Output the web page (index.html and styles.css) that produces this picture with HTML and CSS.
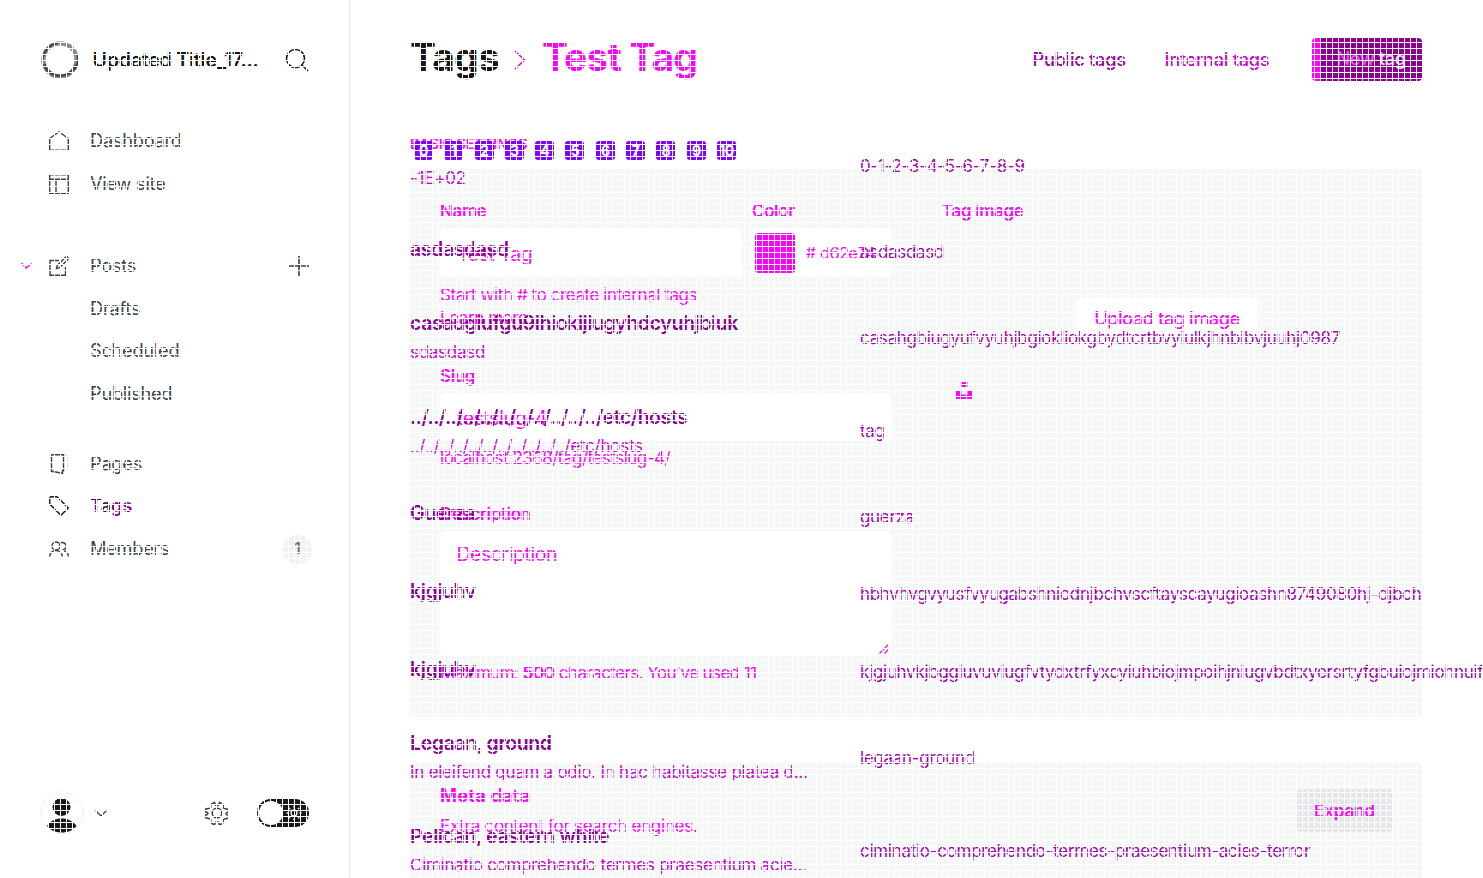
FILE: index.html
```html
<!DOCTYPE html>
<html lang="en">
<head>
<meta charset="utf-8">
<title>Tags</title>
<link rel="stylesheet" href="styles.css">
</head>
<body>
<div class="app">
  <aside class="sidebar">
    <div class="site">
      <svg class="site-logo" viewBox="0 0 40 40"><circle cx="20" cy="20" r="16.6" fill="none" stroke="#8a8a8a" stroke-width="4.4"/><path d="M4 24A17 17 0 0 0 36 25" fill="none" stroke="#444" stroke-width="2.6"/><path d="M5 12A18 18 0 0 1 18 3M2.500 22A18 18 0 0 1 5 12M37.500 15A18 18 0 0 1 35 29" fill="none" stroke="#333" stroke-width="1.600"/></svg>
      <span class="site-name">Updated Title_17...</span>
      <svg class="site-search" viewBox="0 0 24 24"><circle cx="10.500" cy="10.500" r="9"/><path d="M17 17l6 6"/></svg>
    </div>
    <nav class="nav">
      <a class="item"><i></i><svg viewBox="0 0 20 20"><path d="M.7 19.300V7.500L10 .8l9.300 6.700v11.800z"/></svg><span>Dashboard</span></a>
      <a class="item"><i></i><svg viewBox="0 0 20 20"><path d="M.7.8h18.600v18.500H.7zM.7 5.300h18.600M7 5.300v14"/></svg><span>View site</span></a>
    </nav>
    <nav class="nav nav-posts">
      <a class="item"><svg class="caret" viewBox="0 0 12 8"><path d="M1 1l5 5 5-5"/></svg><svg viewBox="0 0 20 20"><path d="M10 4.500H1v14.800h15.500V11M18.800 1.300c-.9-.8-1.800-.6-2.600.2L8.300 9.400 7.500 12.500l3.100-.8 7.900-7.800c.8-.8 1-1.800.3-2.600z"/></svg><span>Posts</span><svg class="plus" viewBox="0 0 22 22"><path d="M11 1v20M1 11h20"/></svg></a>
      <a class="item sub">Drafts</a>
      <a class="item sub">Scheduled</a>
      <a class="item sub">Published</a>
    </nav>
    <nav class="nav nav-pages">
      <a class="item"><i></i><svg viewBox="0 0 20 20"><path d="M7 .8h7.500v16H13M2.500.8H15M2.500.8v16.500l11 2v-3"/><path class="faint" d="M15 .8h3v14h-3"/></svg><span>Pages</span></a>
      <a class="item active"><i></i><svg viewBox="0 0 20 20"><path d="M.8 7.500V2c0-.7.500-1.200 1.200-1.200h5.500c.5 0 .8.200 1.100.5L19.200 12l-7.300 7.300L1.200 8.600c-.3-.3-.4-.6-.4-1.100z"/></svg><span class="current">Tags</span></a>
      <a class="item"><i></i><svg viewBox="0 0 20 20"><circle cx="7" cy="7" r="4"/><path d="M.7 17.500c0-3.500 2.800-6 6.300-6 3.500 0 6.300 2.500 6.300 6M11 4.500c2-2 6-.8 6 2.500 0 2.200-1.600 3.600-3.500 3.600M15 11.800c2.500.4 4.300 2.500 4.300 5.700"/></svg><span>Members</span><em class="count">1</em></a>
    </nav>
    <footer class="user">
      <svg class="avatar" viewBox="0 0 44 44"><circle cx="22" cy="22" r="21" fill="#fff" stroke="#e9ebee"/><circle cx="21.500" cy="16" r="9" fill="#15171a"/><path d="M7 35c3-5 8-7.500 14.500-7.500S33 30 36.500 35c-3.500 4.500-9 6.500-15 6.500S11 39.500 7 35z" fill="#15171a"/></svg>
      <svg class="user-caret" viewBox="0 0 14 8"><path d="M1 1l6 6 6-6"/></svg>
      <svg class="gear" viewBox="0 0 24 24"><circle cx="12" cy="12" r="4.800"/><path d="M9.500 1.500l1 2.300c.6 1.200 2.400 1.200 3 0l1-2.300 3 1.300c.8.500 1 1 .8 1.800-.5 2 .3 3 1.900 3.200l3 .4v3c-1.500.2-2.200.6-2.200 1.600s.7 1.300 2.200 1.500v3l-3 .5c-1.600.2-2.400 1.200-1.900 3 .2.800 0 1.400-.8 1.800l-3 1.100-1-2.100c-.6-1.200-2.400-1.200-3 0l-1 2.100-3-1.300c-.8-.4-1-1-.8-1.800.5-1.800-.3-2.800-1.900-3L.8 17v-3c1.500-.2 2.200-.6 2.200-1.500s-.7-1.400-2.200-1.600V8l3-.4C5.400 7.400 6.200 6.400 5.700 4.600c-.2-.8 0-1.300.8-1.800z"/></svg>
      <span class="toggle"><span class="knob"></span><svg viewBox="0 0 16 16"><circle cx="8" cy="8" r="3"/><path d="M8 .5v2M8 13.500v2M.5 8h2M13.500 8h2M2.700 2.700l1.400 1.400M11.900 11.900l1.400 1.400M2.700 13.300l1.400-1.400M11.900 4.100l1.400-1.400"/></svg></span>
    </footer>
  </aside>

  <main class="main">
    <header class="head">
      <h1 class="crumbs"><span>Tags</span><svg viewBox="0 0 12 20"><path d="M1 1l9.500 9L1 19"/></svg><span class="m">Test Tag</span></h1>
      <div class="tabs"><a class="tab-public">Public tags</a><a class="tab-internal">Internal tags</a><a class="new-tag"><b>New</b> tag</a></div>
    </header>

    <div class="stack">
      <form class="form">
        <h4 class="section">BASIC SETTINGS</h4>
        <section class="panel basics">
          <div class="fields">
            <div class="row">
              <div class="field"><label>Name</label><div class="input">Test Tag</div></div>
              <div class="field color"><label>Color</label><div class="input"><span class="swatch"></span><span class="hash">#</span><span class="hex">d62e74</span></div></div>
            </div>
            <p class="hint first">Start with # to create internal tags</p>
            <p class="hint">Learn more</p>
            <div class="field slug-field"><label>Slug</label><div class="input">testslug-4</div></div>
            <p class="hint url">localhost:2368/tag/testslug-4/</p>
            <div class="field desc-field"><label>Description</label><div class="area">Description<svg viewBox="0 0 10 10"><path d="M.5 9.500l9-9M5.500 9.500l4-4"/></svg></div></div>
            <p class="hint max">Maximum: <b>500</b> characters. You’ve used 11</p>
          </div>
          <div class="image">
            <label>Tag image</label>
            <div class="uploader"><span class="upload">Upload tag image</span><svg viewBox="0 0 17 17"><path d="M5.500 0h6v5h-6zM0 8.500h5.300v4h6.200v-4h5.300V17H0z"/></svg></div>
          </div>
        </section>
        <section class="panel meta">
          <div><h3>Meta data</h3><p>Extra content for search engines.</p></div>
          <span class="expand">Expand</span>
        </section>
        <section class="panel rest"></section>
      </form>

      <ol class="list">
        <li class="tall first"><div><h3 class="keys"><span>0</span><span>1</span><span>2</span><span>3</span><span>4</span><span>5</span><span>6</span><span>7</span><span>8</span><span>9</span><span>10</span></h3><p>-1E+02</p></div><a>0-1-2-3-4-5-6-7-8-9</a></li>
        <li><div><h3>asdasdasd</h3></div><a>asdasdasd</a></li>
        <li class="tall"><div><h3>casaugiufgu9ihiokijiugyhdcyuhjbiuk</h3><p>sdasdasd</p></div><a>casahgbiugyufvyuhjbgiokliokgbydtcrtbvyiulkjhnbibvjuuhj0987</a></li>
        <li class="tall"><div><h3 class="path">../../../../../../../../../../../etc/hosts</h3><p>../../../../../../../../../../../etc/hosts</p></div><a>tag</a></li>
        <li><div><h3>Guerza</h3></div><a>guerza</a></li>
        <li><div><h3>kjgjuhv</h3></div><a>hbhvhvgvyusfvyugabshniodnjbchvscftayscayugioashn8749080hj-djbch</a></li>
        <li><div><h3>kjgjuhv</h3></div><a>kjgjuhvkjbggiuvuviugfvtydxtrfyxcyiuhbiojmpoihjniugvbdtxyersrtyfgbuiojmiohnuif</a></li>
        <li class="tall"><div><h3>Legaan, ground</h3><p>In eleifend quam a odio. In hac habitasse platea d...</p></div><a>legaan-ground</a></li>
        <li class="tall"><div><h3>Pelican, eastern white</h3><p>Ciminatio comprehendo termes praesentium acie...</p></div><a>ciminatio-comprehendo-termes-praesentium-acies-terror</a></li>
      </ol>
    </div>
  </main>
</div>
<div class="mesh"></div>
</body>
</html>
```
FILE: styles.css
```css
* { box-sizing: border-box; }
body { margin: 0; background: #fff; font-family: Inter, "Liberation Sans", sans-serif; color: #15171a; overflow: hidden; }
h1, h3, h4, p, ol { margin: 0; padding: 0; }
svg { display: block; fill: none; stroke: currentColor; flex: none; }
.app { display: flex; height: 878px; overflow: hidden; }

/* Sidebar */
.sidebar { width: 350px; flex: none; border-right: 1px solid #dfe1e4; display: flex; flex-direction: column; color: #394047; }
.site { display: flex; align-items: center; height: 40px; margin-top: 40px; padding-left: 40px; color: #15171a; }
.site-logo { width: 40px; height: 40px; }
.site-name { width: 192px; margin-left: 12.500px; font-size: 19.500px; font-weight: 600; letter-spacing: -.18px; white-space: nowrap; }
.site-search { width: 24px; height: 24px; margin-left: 0; stroke-width: 1.500; }
.nav { display: flex; flex-direction: column; margin-top: 39.700px; }
.nav-posts { margin-top: 39.800px; }
.nav-pages { margin-top: 27.500px; }
.item { display: flex; align-items: center; height: 42.600px; padding-left: 20px; font-size: 18.200px; letter-spacing: -.24px; }
.item i, .item .caret { width: 12px; height: 8px; margin-right: 17px; stroke-width: 1.300; }
.item .caret { color: #f0f; }
.item svg { width: 20px; height: 20px; margin-right: 21px; stroke-width: 1.400; }
.item svg.caret { width: 13px; height: 8px; margin-right: 16px; }
.item .faint { stroke: #d5d8dc; }
.item span { width: 193px; padding-bottom: 2px; }
.item svg.plus { width: 22px; height: 22px; margin: 0 0 0 5px; stroke-width: 1.600; }
.item.sub { padding: 0 0 2px 90px; }
.item.active { color: #15171a; font-weight: 600; letter-spacing: 0; }
.item .current { background: linear-gradient(90deg, #15171a 4px, #8b008f 4px 9px, #15171a 9px 19px, #8b008f 19px); background-clip: text; -webkit-background-clip: text; color: transparent; }
.count { width: 29px; height: 29px; border-radius: 50%; background: #eff1f3; font-size: 15.600px; font-style: normal; font-weight: 600; line-height: 28px; text-align: center; color: #6b7580; }
.user { display: flex; align-items: center; height: 44px; margin: auto 0 43px; padding-left: 39.500px; }
.avatar { width: 44px; height: 44px; stroke: none; }
.user-caret { width: 14px; height: 8px; margin-left: 10px; stroke-width: 1.300; }
.gear { width: 24px; height: 24px; margin-left: 97px; stroke-width: 1.500; }
.toggle { display: flex; align-items: center; justify-content: space-between; width: 52px; height: 28px; margin-left: 28.500px; padding: 0 7px 0 2px; border-radius: 14px; background: #15171a; color: #fff; }
.knob { width: 24px; height: 24px; border-radius: 50%; background: #fff; }
.toggle svg { width: 16px; height: 16px; stroke-width: 1.300; }

/* Header */
.main { flex: 1; min-width: 0; padding-left: 60px; overflow: hidden; }
.head { display: flex; align-items: center; justify-content: space-between; width: 1012px; height: 119.500px; }
.crumbs { display: flex; align-items: center; height: 47px; margin-top: -6px; font-size: 39px; font-weight: 700; letter-spacing: -.85px; line-height: 47px; white-space: nowrap; }
.crumbs svg { width: 12px; height: 20px; margin: 7px 15.500px 0 15.500px; color: #e000e0; stroke-width: 1.500; }
.m { color: #f0f; }
.tabs { display: flex; align-items: center; font-size: 18.200px; font-weight: 500; letter-spacing: -.26px; }
.tab-public { width: 132px; padding-bottom: 2px; color: #98009e; }
.tab-internal { width: 147.500px; padding-bottom: 2px; color: #c800d0; }
.new-tag { width: 110px; height: 43px; border-radius: 4px; background: linear-gradient(90deg, #f0f 8px, #8b008f 8px); color: #eadcf2; line-height: 41px; text-align: center; padding-left: 8px; letter-spacing: -.4px; }
.new-tag b { font-weight: 500; color: #f050f0; }

/* Form and list share one cell */
.stack { display: grid; }
.form, .list { grid-area: 1 / 1; min-width: 0; }
.form { width: 1012px; padding-top: 13.500px; color: #f0f; }
.section { height: 22px; margin-bottom: 14px; font-size: 14.300px; font-weight: 600; letter-spacing: -.1px; line-height: 21px; }
.panel { border-radius: 4px; background: #f5f7f7; }
.basics { display: flex; gap: 50px; height: 548px; padding: 30px 30px 0; }
.fields { width: 452px; }
.row { display: grid; grid-template-columns: 302px 140px; gap: 10px; }
label { display: block; height: 22px; margin-bottom: 7px; font-size: 16.900px; font-weight: 600; letter-spacing: -.32px; line-height: 24px; }
.input { display: flex; align-items: center; height: 48.500px; padding: 3px 17px 0; border-radius: 5px; background: #fff; font-size: 19.500px; letter-spacing: -.42px; }
.color .input { padding: 0 3px; }
.swatch { width: 40px; height: 40px; margin-top: 1px; border-radius: 3px; background: #f0f; }
.hash { width: 14px; margin-left: 11px; font-size: 15.600px; }
.hex { padding-top: 1px; font-size: 16.500px; letter-spacing: -.7px; }
.hint { font-size: 16.900px; letter-spacing: -.37px; line-height: 23px; white-space: nowrap; }
.hint.first { margin-top: 7px; }
.slug-field { margin-top: 34px; }
.hint.url { margin-top: 6px; letter-spacing: -.46px; }
.desc-field { margin-top: 31.500px; }
.area { display: flex; justify-content: space-between; height: 125px; padding: 9px 3px 2px 16.500px; border-radius: 5px; background: #fff; font-size: 19.500px; letter-spacing: -.46px; line-height: 28px; }
.area svg { width: 10px; height: 10px; align-self: flex-end; stroke-width: 1.300; }
.hint.max { margin-top: 6px; letter-spacing: -.52px; }
.image { width: 450px; }
.uploader { display: grid; grid-template-rows: 180px; justify-items: center; align-items: center; border-top: 1px solid #fbfcfc; border-radius: 4px; }
.upload { grid-area: 1 / 1; height: 42px; margin-bottom: 1px; padding: 0 18px; border-radius: 4px; background: #fff; font-size: 18.200px; font-weight: 500; letter-spacing: -.43px; line-height: 40px; }
.uploader svg { grid-area: 1 / 1; width: 17px; height: 17px; margin: 0 0 10px 14px; place-self: end start; fill: #f0f; stroke: none; }
.meta { display: flex; justify-content: space-between; height: 96px; margin-top: 46px; padding: 17px 30px 0; border-bottom: 1px solid #fbfcfc; border-radius: 4px 4px 0 0; }
.meta h3 { font-size: 18.200px; font-weight: 700; letter-spacing: .2px; line-height: 30px; }
.meta p { font-size: 16.900px; letter-spacing: -.22px; line-height: 32px; }
.expand { width: 95px; height: 43px; margin-top: 9px; border-radius: 4px; background: #e4e6e9; font-size: 16.900px; font-weight: 600; line-height: 44px; text-align: center; }
.rest { height: 30px; border-radius: 0; }

.list { position: relative; list-style: none; white-space: nowrap; }
.list li { display: grid; grid-template-columns: 450px auto; align-items: center; height: 77.700px; }
.list li.tall { height: 93.300px; }
.list li.first { height: 94.600px; }
.list li > div { padding-bottom: 7px; }
.list li.tall > div { padding-bottom: 0; }
.list h3 { color: #8b0093; font-size: 19.500px; font-weight: 600; letter-spacing: -.4px; line-height: 29px; }
.list h3.path { letter-spacing: -.53px; }
.list p, .list a { font-size: 16.900px; letter-spacing: -.24px; line-height: 29px; }
.list p { color: #c800d0; letter-spacing: -.21px; }
.list a { color: #a200ae; }
.list h3.keys { display: flex; align-items: center; gap: 11.300px; padding: 0 0 0 4px; }
.keys + p { padding-top: 4px; }
.keys span { width: 19px; height: 19px; border-radius: 3px; background: #7f00ff; color: #fff; font-size: 14px; font-weight: 700; line-height: 19px; text-align: center; letter-spacing: -.5px; }

/* Fine white mesh over the whole page */
.mesh { position: fixed; inset: 0; z-index: 5; pointer-events: none; background-image: linear-gradient(90deg, #fff 1px, transparent 1px), linear-gradient(#fff 1px, transparent 1px); background-size: 6px 6px; }
```
